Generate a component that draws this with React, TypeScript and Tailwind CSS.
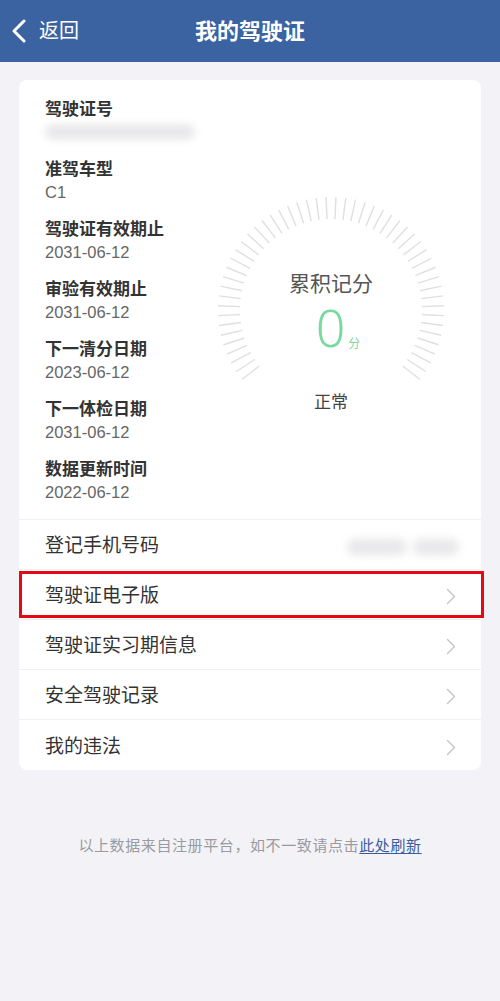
import React from 'react';

const info = [
  { label: '驾驶证号', value: null },
  { label: '准驾车型', value: 'C1' },
  { label: '驾驶证有效期止', value: '2031-06-12' },
  { label: '审验有效期止', value: '2031-06-12' },
  { label: '下一清分日期', value: '2023-06-12' },
  { label: '下一体检日期', value: '2031-06-12' },
  { label: '数据更新时间', value: '2022-06-12' },
];

const rows = ['驾驶证电子版', '驾驶证实习期信息', '安全驾驶记录', '我的违法'];

function Chevron() {
  return (
    <svg width="10" height="17" viewBox="0 0 10 17" fill="none">
      <polyline points="1.5,1.5 8.5,8.5 1.5,15.5" stroke="#c4c4c8" strokeWidth="1.4" strokeLinecap="round" strokeLinejoin="round" />
    </svg>
  );
}

function Gauge() {
  const ticks = [];
  const count = 52;
  for (let i = 0; i < count; i++) {
    const a = ((-128 + (256 / (count - 1)) * i) * Math.PI) / 180;
    const r1 = 91;
    const r2 = 113;
    ticks.push(
      <line
        key={i}
        x1={120 + r1 * Math.sin(a)}
        y1={120 - r1 * Math.cos(a)}
        x2={120 + r2 * Math.sin(a)}
        y2={120 - r2 * Math.cos(a)}
        stroke="#e0e0e0"
        strokeWidth="1.4"
      />
    );
  }
  return (
    <div className="relative ml-[2px] mt-[110px] h-[240px] w-[240px]">
      <svg className="absolute inset-0" width="240" height="240" viewBox="0 0 240 240">
        {ticks}
      </svg>
      <div className="relative flex flex-col items-center pt-[80px]">
        <div className="text-[21px] leading-[28px] text-[#555]">累积记分</div>
        <div className="mt-[4px] flex items-end pl-[14px]">
          <span className="font-['Noto_Sans',sans-serif] text-[52px] font-light leading-[50px] text-[#7ad9a0]">0</span>
          <span className="mb-[1px] ml-[3px] text-[12px] leading-[14px] text-[#7ad9a0]">分</span>
        </div>
        <div className="mt-[39px] text-[17px] leading-[24px] text-[#444]">正常</div>
      </div>
    </div>
  );
}

export default function App() {
  return (
    <div className="min-h-[1001px] bg-[#f3f3f7] font-['Liberation_Sans','Noto_Sans_CJK_SC',sans-serif]">
      <header className="relative flex h-[62px] items-center justify-center bg-[#3b63a2] text-white">
        <div className="absolute left-[11px] top-0 flex h-full items-center gap-[12px]">
          <svg width="16" height="24" viewBox="0 0 16 24" fill="none">
            <polyline points="13,2 3,12 13,22" stroke="white" strokeWidth="3" strokeLinecap="round" strokeLinejoin="round" />
          </svg>
          <span className="text-[20px]">返回</span>
        </div>
        <h1 className="text-[22px] font-bold">我的驾驶证</h1>
      </header>

      <div className="mx-[19px] mt-[18px] rounded-[8px] bg-white">
        <div className="flex border-b border-[#efeff2]">
          <div className="w-[190px] pb-[16px] pl-[26px] pt-[19px]">
            {info.map((item) => (
              <div key={item.label} className="mb-[16px] last:mb-0">
                <div className="text-[17px] font-bold leading-[22px] text-[#333]">{item.label}</div>
                {item.value ? (
                  <div className="text-[16.5px] leading-[22px] text-[#666]">{item.value}</div>
                ) : (
                  <div className="flex h-[22px] items-center">
                    <div className="h-[14px] w-[150px] rounded-full bg-[#e6e6e8] blur-[4px]" />
                  </div>
                )}
              </div>
            ))}
          </div>
          <Gauge />
        </div>

        <div className="flex h-[50px] items-center justify-between border-b border-[#f0f0f3] pl-[26px] pr-[22px] pt-[4px]">
          <span className="text-[19px] text-[#333]">登记手机号码</span>
          <div className="flex gap-[6px]">
            <div className="h-[16px] w-[60px] rounded-full bg-[#e8e8ea] blur-[4px]" />
            <div className="h-[16px] w-[46px] rounded-full bg-[#e8e8ea] blur-[4px]" />
          </div>
        </div>

        {rows.map((r, i) => (
          <div
            key={r}
            className={`relative flex h-[50px] items-center justify-between pl-[26px] pr-[25px] pt-[4px] ${i < rows.length - 1 ? 'border-b border-[#f0f0f3]' : ''}`}
          >
            <span className="text-[19px] text-[#333]">{r}</span>
            <Chevron />
            {i === 0 && <div className="absolute -right-[3px] bottom-[1px] left-0 top-[1px] border-[3px] border-[#e50914]" />}
          </div>
        ))}
      </div>

      <p className="mt-[65px] text-center text-[15px] tracking-[0.6px] text-[#9a9a9f]">
        以上数据来自注册平台，如不一致请点击
        <span className="text-[#3b5d9c] underline underline-offset-2">此处刷新</span>
      </p>
    </div>
  );
}
